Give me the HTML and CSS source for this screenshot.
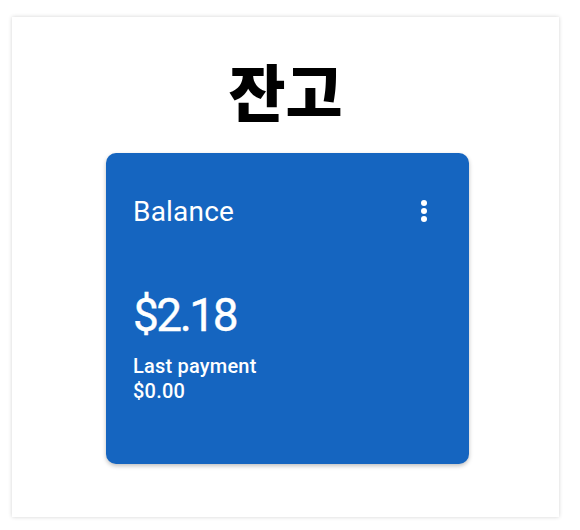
FILE: index.html
```html
<!DOCTYPE html>
<html lang="ko">
<head>
  <meta charset="UTF-8" />
  <meta name="viewport" content="width=device-width, initial-scale=1.0"/>
  <title>잔고</title>
  <link rel="stylesheet" href="styles.css">
</head>
<body>
  <div class="panel">
    <h1 class="title">잔고</h1>

    <div class="card">
      <div class="card-head">
        <span class="card-label">Balance</span>
        <svg class="more" width="8" height="24" viewBox="0 0 8 24" aria-hidden="true">
          <circle cx="4" cy="4" r="3" fill="#fff"/>
          <circle cx="4" cy="12" r="3" fill="#fff"/>
          <circle cx="4" cy="20" r="3" fill="#fff"/>
        </svg>
      </div>
      <div class="amount">$2.18</div>
      <div class="last">
        <div>Last payment</div>
        <div>$0.00</div>
      </div>
    </div>
  </div>
</body>
</html>
```

FILE: styles.css
```css
body {
  margin: 0;
  padding: 17px 21px 13px 12px;
  background-color: #fff;
  font-family: Roboto, "Noto Sans", sans-serif;
}

.panel {
  width: 547px;
  height: 500px;
  box-sizing: border-box;
  background: #fff;
  box-shadow: 0 0 4px rgba(0, 0, 0, 0.18);
  padding-top: 30px;
}

.title {
  margin: 0 0 20px;
  text-align: center;
  font-family: "Noto Sans CJK KR", sans-serif;
  font-weight: 900;
  font-size: 62px;
  line-height: 86px;
  color: #000;
}

.card {
  width: 363px;
  height: 311px;
  margin-left: 94px;
  box-sizing: border-box;
  background-color: #1565c0;
  border-radius: 10px;
  box-shadow: 0 2px 4px rgba(0, 0, 0, 0.25);
  padding: 36px 27px 0 27px;
  color: #fff;
}

.card-head {
  display: flex;
  justify-content: space-between;
  align-items: center;
  height: 44px;
}

.card-label {
  font-size: 28px;
  letter-spacing: 0.2px;
}

.more {
  margin-right: 14px;
}

.amount {
  margin-top: 54px;
  font-size: 46px;
  line-height: 56px;
  letter-spacing: -2.5px;
  -webkit-text-stroke: 0.4px #fff;
}

.last {
  margin-top: 11px;
  font-size: 20px;
  font-weight: 500;
  line-height: 25px;
  letter-spacing: 0.2px;
}
```
